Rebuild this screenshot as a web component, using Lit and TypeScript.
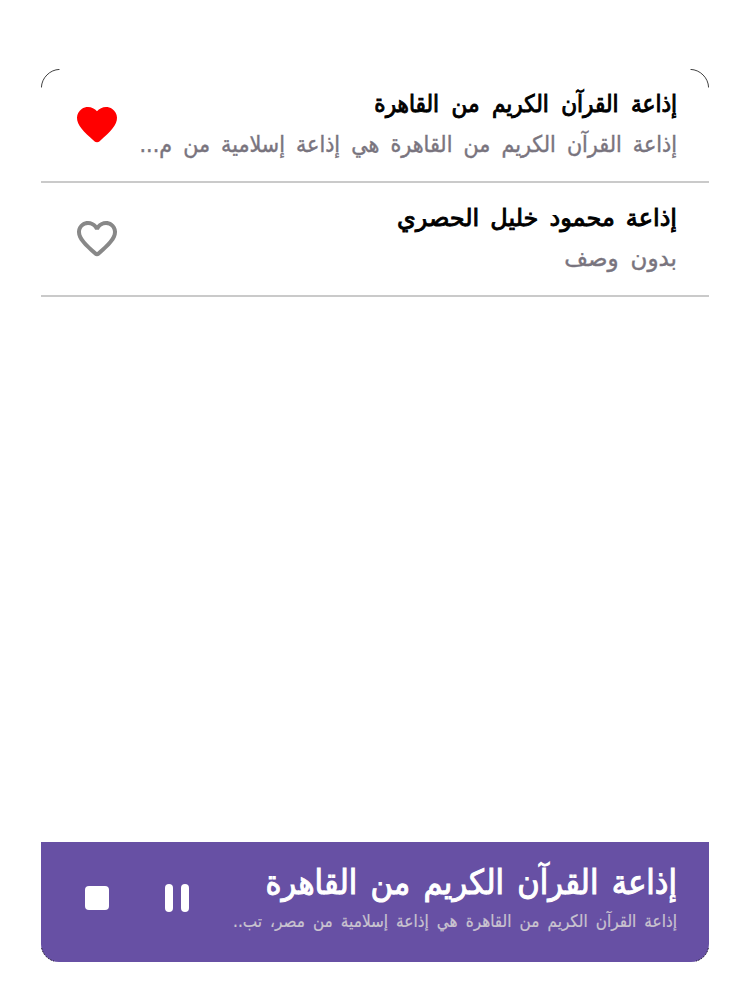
import { LitElement, html, css } from "lit";
import { customElement, state } from "lit/decorators.js";
import { classMap } from "lit/directives/class-map.js";

interface Station {
  name: string;
  about: string;
  liked: boolean;
}

const HEART =
  "M13.35 20.13c-.76.69-1.93.69-2.69-.01l-.11-.1C5.3 15.27 1.87 12.16 2 8.28c.06-1.7.93-3.33 2.34-4.29 2.64-1.8 5.9-.96 7.66 1.1 1.76-2.06 5.02-2.91 7.66-1.1 1.41.96 2.28 2.59 2.34 4.29.14 3.88-3.3 6.99-8.55 11.76l-.1.09z";
const HEART_OUTLINE =
  "M19.66 3.99c-2.64-1.8-5.9-.96-7.66 1.1-1.76-2.06-5.02-2.91-7.66-1.1-1.4.96-2.28 2.58-2.34 4.29-.14 3.88 3.3 6.99 8.55 11.76l.1.09c.76.69 1.93.69 2.69-.01l.11-.1c5.25-4.76 8.68-7.87 8.55-11.75-.06-1.7-.94-3.32-2.34-4.28zM12.1 18.55l-.1.1-.1-.1C7.14 14.24 4 11.39 4 8.5 4 6.5 5.5 5 7.5 5c1.54 0 3.04.99 3.57 2.36h1.87C13.46 5.99 14.96 5 16.5 5c2 0 3.5 1.5 3.5 3.5 0 2.89-3.14 5.74-7.9 10.05z";

@customElement("app-root")
export class AppRoot extends LitElement {
  static styles = css`
    :host {
      display: block;
      box-sizing: border-box;
      height: 1003px;
      padding: 69px 36px 41px 41px;
      background: #fff;
      direction: rtl;
      font-family: "DejaVu Sans Condensed", "DejaVu Sans", sans-serif;
    }
    .card {
      position: relative;
      display: flex;
      flex-direction: column;
      height: 893px;
    }
    .list { flex: 1; }
    .row {
      display: flex;
      align-items: center;
      justify-content: space-between;
      height: 112px;
      padding: 0 32px;
      border-bottom: 2px solid #cacaca;
    }
    .text { white-space: nowrap; }
    .name {
      font-size: 24px;
      line-height: 42px;
      color: #000;
      -webkit-text-stroke: 0.9px #000;
      word-spacing: 5.6px;
    }
    .about {
      padding-bottom: 3px;
      font-size: 23px;
      line-height: 39px;
      color: #79747e;
      -webkit-text-stroke: 0.4px #79747e;
      word-spacing: 4.5px;
    }
    .wide { font-family: "DejaVu Sans", sans-serif; }
    .wide .name { word-spacing: 3.4px; }
    .heart { display: block; width: 48px; height: 48px; }
    .player {
      display: flex;
      align-items: center;
      justify-content: space-between;
      height: 120px;
      box-sizing: border-box;
      padding: 0 32px 0 44px;
      background: #6750a4;
      border-radius: 0 0 18px 18px;
    }
    .now {
      font-size: 34px;
      line-height: 42px;
      color: #fff;
      -webkit-text-stroke: 1px #fff;
      word-spacing: 3.6px;
    }
    .sub {
      margin-top: 5px;
      padding-bottom: 10px;
      font-size: 17px;
      line-height: 26px;
      color: #cac4d0;
      -webkit-text-stroke: 0.2px #cac4d0;
      word-spacing: 3.2px;
    }
    .controls { display: flex; align-items: center; gap: 56px; margin-top: -8px; }
    .pause { display: flex; gap: 8px; }
    .pause i { width: 8px; height: 28px; border-radius: 4px; background: #fff; }
    .stop { width: 24px; height: 24px; border-radius: 4px; background: #fff; }
    .edge { position: absolute; width: 20px; height: 20px; fill: none; stroke: #000; stroke-width: 0.75; }
    .tl { left: 0; top: 0; }
    .tr { right: 0; top: 0; transform: scaleX(-1); }
    .bl { left: 0; bottom: 0; transform: scaleY(-1); }
    .br { right: 0; bottom: 0; transform: scale(-1); }
    .bl, .br { stroke-dasharray: 1.6 1.4; }
  `;

  @state() private stations: Station[] = [
    { name: "إذاعة القرآن الكريم من القاهرة", about: "إذاعة القرآن الكريم من القاهرة هي إذاعة إسلامية من م...", liked: true },
    { name: "إذاعة محمود خليل الحصري", about: "بدون وصف", liked: false },
  ];

  private edge(c: string) {
    const top = c[0] === "t";
    return html`<svg class="edge ${c}" viewBox="0 0 20 20">
      <path d=${top ? "M.4 18.5A19 19 0 0 1 18.5.4" : "M.6 14A17 17 0 0 1 13 .9"} />
    </svg>`;
  }

  render() {
    return html`<div class="card">
      <div class="list">
        ${this.stations.map(
          (s) => html`<div class="row">
            <div class=${classMap({ text: true, wide: s.name.length < 26 })}>
              <div class="name">${s.name}</div>
              <div class="about">${s.about}</div>
            </div>
            <svg class="heart" viewBox="0 0 24 24"><path fill=${s.liked ? "#f00" : "#888"} d=${s.liked ? HEART : HEART_OUTLINE} /></svg>
          </div>`
        )}
      </div>
      <div class="player">
        <div class="text">
          <div class="now">إذاعة القرآن الكريم من القاهرة</div>
          <div class="sub">إذاعة القرآن الكريم من القاهرة هي إذاعة إسلامية من مصر، تب..</div>
        </div>
        <div class="controls"><div class="pause"><i></i><i></i></div><div class="stop"></div></div>
      </div>
      ${["tl", "tr", "bl", "br"].map((c) => this.edge(c))}
    </div>`;
  }
}
